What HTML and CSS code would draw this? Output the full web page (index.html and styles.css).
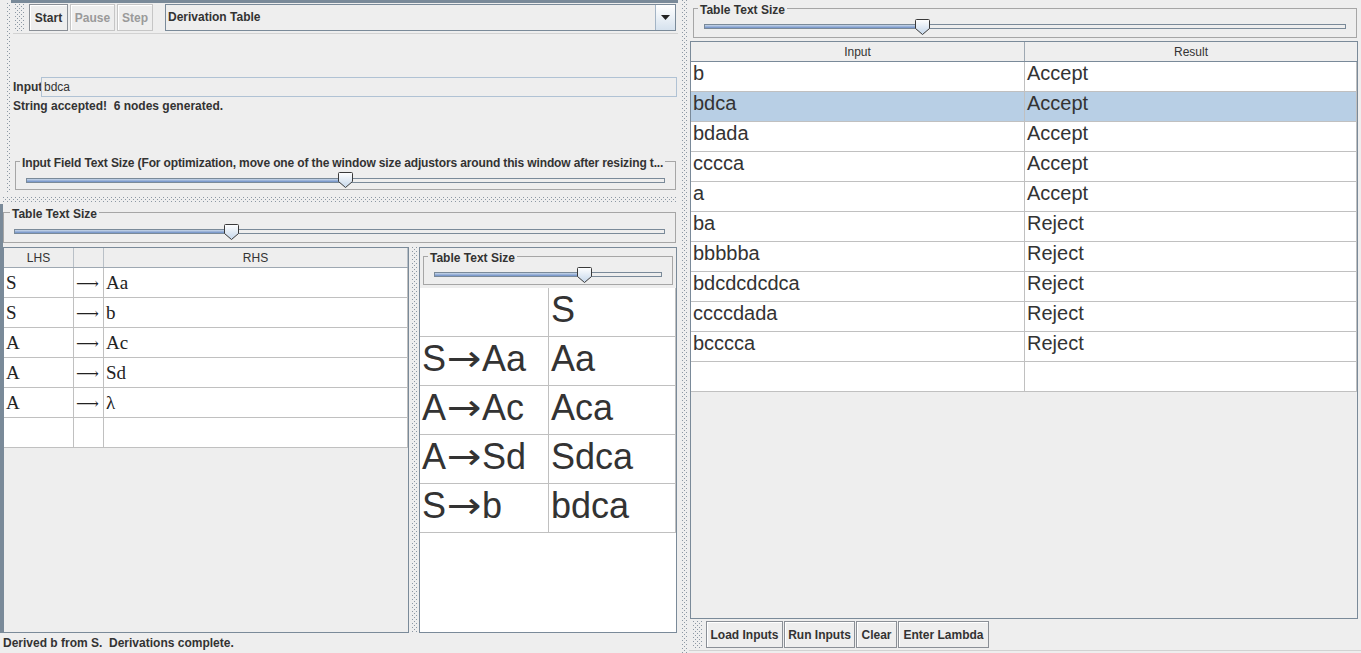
FILE: index.html
```html
<!DOCTYPE html>
<html>
<head>
<meta charset="utf-8">
<title>Brute Force Parser</title>
<link rel="stylesheet" href="styles.css">
</head>
<body>
<div class="app">
  <div class="left">
    <div class="top-panel">
      <div class="mini-split"><div class="bumps"></div></div>
      <div class="control">
        <div class="toolbar">
          <div class="grip bumps"></div>
          <button class="btn btn-start">Start</button>
          <button class="btn btn-pause" disabled>Pause</button>
          <button class="btn btn-step" disabled>Step</button>
          <div class="combo">
            <span class="combo-text">Derivation Table</span>
            <span class="combo-arrow"><svg width="9" height="5" viewBox="0 0 9 5"><path d="M0 0H9L4.5 5Z" fill="#222"/></svg></span>
          </div>
        </div>
        <div class="input-row">
          <span class="input-label">Input</span>
          <div class="input-field">bdca</div>
        </div>
        <div class="message">String accepted!  6 nodes generated.</div>
        <fieldset class="titled fs-input">
          <legend class="lg-long">Input Field Text Size (For optimization, move one of the window size adjustors around this window after resizing t...</legend>
          <div class="slider s-input">
            <div class="track"><div class="fill" style="width:318px"></div></div>
            <svg class="thumb" style="left:312px" width="15" height="16" viewBox="0 0 15 16"><defs><linearGradient id="t1" x1="0" y1="0" x2="0" y2="1"><stop offset="0" stop-color="#ffffff"/><stop offset="1" stop-color="#c4d6ea"/></linearGradient></defs><path d="M1.5 .5H13.5Q14.5 .5 14.5 1.5V9.5L7.5 15.5L.5 9.5V1.5Q.5 .5 1.5 .5Z" fill="url(#t1)" stroke="#3a3a3a"/></svg>
          </div>
        </fieldset>
      </div>
    </div>
    <div class="h-split"><div class="bumps"></div></div>
    <div class="lower">
      <div class="edge"></div>
      <div class="lower-content">
        <fieldset class="titled fs-table">
          <legend class="lg-wide">Table Text Size</legend>
          <div class="slider s-table">
            <div class="track"><div class="fill" style="width:216px"></div></div>
            <svg class="thumb" style="left:210px" width="15" height="16" viewBox="0 0 15 16"><defs><linearGradient id="t2" x1="0" y1="0" x2="0" y2="1"><stop offset="0" stop-color="#ffffff"/><stop offset="1" stop-color="#c4d6ea"/></linearGradient></defs><path d="M1.5 .5H13.5Q14.5 .5 14.5 1.5V9.5L7.5 15.5L.5 9.5V1.5Q.5 .5 1.5 .5Z" fill="url(#t2)" stroke="#3a3a3a"/></svg>
          </div>
        </fieldset>
        <div class="tables">
          <div class="scroll grammar">
            <div class="gh">
              <div class="c-lhs">LHS</div><div class="c-arr"></div><div class="c-rhs">RHS</div>
            </div>
            <div class="gr"><div class="c-lhs">S</div><div class="c-arr"><span class="arr">⟶</span></div><div class="c-rhs">Aa</div></div>
            <div class="gr"><div class="c-lhs">S</div><div class="c-arr"><span class="arr">⟶</span></div><div class="c-rhs">b</div></div>
            <div class="gr"><div class="c-lhs">A</div><div class="c-arr"><span class="arr">⟶</span></div><div class="c-rhs">Ac</div></div>
            <div class="gr"><div class="c-lhs">A</div><div class="c-arr"><span class="arr">⟶</span></div><div class="c-rhs">Sd</div></div>
            <div class="gr"><div class="c-lhs">A</div><div class="c-arr"><span class="arr">⟶</span></div><div class="c-rhs">λ</div></div>
            <div class="gr"><div class="c-lhs"></div><div class="c-arr"></div><div class="c-rhs"></div></div>
          </div>
          <div class="inner-split"><div class="bumps"></div></div>
          <div class="deriv-panel">
            <fieldset class="titled fs-deriv">
              <legend>Table Text Size</legend>
              <div class="slider s-deriv">
                <div class="track"><div class="fill" style="width:149px"></div></div>
                <svg class="thumb" style="left:143px" width="15" height="16" viewBox="0 0 15 16"><defs><linearGradient id="t3" x1="0" y1="0" x2="0" y2="1"><stop offset="0" stop-color="#ffffff"/><stop offset="1" stop-color="#c4d6ea"/></linearGradient></defs><path d="M1.5 .5H13.5Q14.5 .5 14.5 1.5V9.5L7.5 15.5L.5 9.5V1.5Q.5 .5 1.5 .5Z" fill="url(#t3)" stroke="#3a3a3a"/></svg>
              </div>
            </fieldset>
            <div class="deriv-view">
              <div class="dr"><div class="d1"></div><div class="d2">S</div></div>
              <div class="dr"><div class="d1">S<span class="darr">→</span>Aa</div><div class="d2">Aa</div></div>
              <div class="dr"><div class="d1">A<span class="darr">→</span>Ac</div><div class="d2">Aca</div></div>
              <div class="dr"><div class="d1">A<span class="darr">→</span>Sd</div><div class="d2">Sdca</div></div>
              <div class="dr"><div class="d1">S<span class="darr">→</span>b</div><div class="d2">bdca</div></div>
            </div>
          </div>
        </div>
      </div>
    </div>
    <div class="status">Derived b from S.  Derivations complete.</div>
  </div>
  <div class="main-split"><div class="bumps"></div></div>
  <div class="right">
    <fieldset class="titled fs-results">
      <legend>Table Text Size</legend>
      <div class="slider s-results">
        <div class="track"><div class="fill" style="width:217px"></div></div>
        <svg class="thumb" style="left:211px" width="15" height="16" viewBox="0 0 15 16"><defs><linearGradient id="t4" x1="0" y1="0" x2="0" y2="1"><stop offset="0" stop-color="#ffffff"/><stop offset="1" stop-color="#c4d6ea"/></linearGradient></defs><path d="M1.5 .5H13.5Q14.5 .5 14.5 1.5V9.5L7.5 15.5L.5 9.5V1.5Q.5 .5 1.5 .5Z" fill="url(#t4)" stroke="#3a3a3a"/></svg>
      </div>
    </fieldset>
    <div class="scroll results">
      <div class="rh"><div class="r1">Input</div><div class="r2">Result</div></div>
      <div class="rr"><div class="r1">b</div><div class="r2">Accept</div></div>
      <div class="rr sel"><div class="r1">bdca</div><div class="r2">Accept</div></div>
      <div class="rr"><div class="r1">bdada</div><div class="r2">Accept</div></div>
      <div class="rr"><div class="r1">cccca</div><div class="r2">Accept</div></div>
      <div class="rr"><div class="r1">a</div><div class="r2">Accept</div></div>
      <div class="rr"><div class="r1">ba</div><div class="r2">Reject</div></div>
      <div class="rr"><div class="r1">bbbbba</div><div class="r2">Reject</div></div>
      <div class="rr"><div class="r1">bdcdcdcdca</div><div class="r2">Reject</div></div>
      <div class="rr"><div class="r1">ccccdada</div><div class="r2">Reject</div></div>
      <div class="rr"><div class="r1">bcccca</div><div class="r2">Reject</div></div>
      <div class="rr"><div class="r1"></div><div class="r2"></div></div>
    </div>
    <div class="bottom-bar">
      <div class="grip bumps"></div>
      <button class="btn btn-load">Load Inputs</button>
      <button class="btn btn-run">Run Inputs</button>
      <button class="btn btn-clear">Clear</button>
      <button class="btn btn-lambda">Enter Lambda</button>
    </div>
  </div>
</div>
</body>
</html>
```
FILE: styles.css
```css
* { box-sizing: border-box; }
html, body { margin: 0; padding: 0; }
body {
  width: 1361px;
  height: 653px;
  overflow: hidden;
  background: #eeeeee;
  font: bold 12px "Liberation Sans", Arial, sans-serif;
  color: #333333;
}
.app { display: flex; width: 1361px; height: 653px; }

/* Metal "bumps" texture used by split dividers and toolbar grips */
.bumps {
  background-color: #eeeeee;
  background-image:
    conic-gradient(at 1px 1px, transparent 75%, #8c98a4 75%),
    conic-gradient(at 1px 1px, transparent 75%, #8c98a4 75%);
  background-size: 4px 4px, 4px 4px;
  background-position: 0 0, 2px 2px;
}

/* ---------- left side ---------- */
.left { width: 680px; flex-shrink: 0; display: flex; flex-direction: column; min-width: 0; }
.top-panel { height: 195px; flex-shrink: 0; display: flex; padding-left: 5px; padding-right: 2px; }
.mini-split { width: 6px; flex-shrink: 0; padding: 3px 0 2px 2px; display: flex; }
.mini-split .bumps { flex: 1; }
.control {
  flex: 1;
  min-width: 0;
  border-top: 3px solid #7a8a99;
  padding-left: 2px;
  display: flex;
  flex-direction: column;
}
.toolbar {
  height: 31px;
  flex-shrink: 0;
  padding: 1px 2px 0 2px;
  border-bottom: 1px solid #d2d2d2;
  display: flex;
  align-items: flex-start;
}
.grip { width: 10px; height: 27px; flex-shrink: 0; }

.btn {
  appearance: none;
  -webkit-appearance: none;
  height: 27px;
  flex-shrink: 0;
  padding: 0;
  margin: 0;
  border: 1px solid #8a8f96;
  box-shadow: inset 1px 1px 0 #ffffff;
  background: #eeeeee;
  font: bold 12px "Liberation Sans", Arial, sans-serif;
  color: #333333;
  text-align: center;
}
.btn:disabled { border-color: #c6c6c6; color: #9a9a9a; }
.btn-start { width: 39px; margin-left: 4px; }
.btn-pause { width: 45px; margin-left: 2px; }
.btn-step { width: 36px; margin-left: 2px; }
.btn-load { width: 77px; margin-left: 3px; }
.btn-run { width: 71px; margin-left: 1px; }
.btn-clear { width: 41px; margin-left: 1px; }
.btn-lambda { width: 91px; margin-left: 1px; }

.combo {
  flex: 1;
  min-width: 0;
  height: 27px;
  margin-left: 12px;
  border: 1px solid #7a8a99;
  background: #eeeeee;
  display: flex;
}
.combo-text { flex: 1; padding-left: 2px; line-height: 25px; }
.combo-arrow {
  width: 20px;
  border-left: 1px solid #a3b4c5;
  background: linear-gradient(#ffffff, #d6e2ee);
  display: flex;
  align-items: center;
  justify-content: center;
}

.input-row { margin-top: 43px; display: flex; height: 20px; flex-shrink: 0; }
.input-label { width: 28px; line-height: 20px; }
.input-field {
  flex: 1;
  margin-right: 1px;
  border: 1px solid #b0c2d4;
  background: #eeeeee;
  font-weight: normal;
  line-height: 18px;
  padding-left: 2px;
}
.message { margin-top: 2px; line-height: 14px; white-space: pre; }

/* titled borders */
.titled {
  margin: 0;
  padding: 0 10px 2px 10px;
  border: 1px solid #a6a6a6;
  min-width: 0;
  flex-shrink: 0;
}
.titled legend {
  padding: 3px 2px 0 2px;
  margin-left: -6px;
  line-height: 14px;
  font-weight: bold;
  white-space: nowrap;
}
.titled legend.lg-wide { margin-left: -4px; }
.titled legend.lg-long { letter-spacing: -0.13px; }
.fs-input { margin: 40px 2px 0 2px; padding-bottom: 1px; }
.fs-table { margin: 0 4px 0 0; padding-bottom: 2px; }
.fs-deriv { margin: 0 3px; padding-bottom: 1px; }
.fs-results { margin: 0 4px; padding-bottom: 2px; }

/* sliders */
.slider { position: relative; }
.track {
  height: 5px;
  border: 1px solid #7a8a99;
  background: #eeeeee;
}
.fill { height: 100%; background: linear-gradient(#c9d8ea, #6f8fc6); }
.thumb { position: absolute; }
.s-input { height: 18px; padding-top: 8px; }
.s-input .thumb { top: 2px; }
.s-table { height: 19px; padding-top: 8px; }
.s-table .thumb { top: 3px; }
.s-deriv, .s-results { height: 18px; padding-top: 7px; }
.s-deriv .thumb, .s-results .thumb { top: 2px; }

.h-split { height: 9px; flex-shrink: 0; padding: 2px 3px 2px 3px; display: flex; }
.h-split .bumps { flex: 1; }

.lower { flex: 1; display: flex; min-height: 0; }
.edge { width: 3px; flex-shrink: 0; background: #7a8a99; margin-bottom: 1px; }
.lower-content { flex: 1; min-width: 0; display: flex; flex-direction: column; }
.tables { margin-top: 4px; height: 386px; flex-shrink: 0; display: flex; }

.scroll { border: 1px solid #7a8a99; background: #eeeeee; overflow: hidden; }
.grammar { width: 406px; flex-shrink: 0; }

.gh { display: flex; height: 20px; border-bottom: 1px solid #9ea8b2; }
.gh > div {
  border-right: 1px solid #b9c0c7;
  text-align: center;
  font: 12px "Liberation Sans", Arial, sans-serif;
  padding-top: 2px;
  line-height: 17px;
  color: #333333;
}
.c-lhs { width: 70px; }
.c-arr { width: 30px; }
.c-rhs { width: 304px; }
.gr { display: flex; height: 30px; background: #ffffff; }
.gr > div {
  border-right: 1px solid #c0c0c0;
  border-bottom: 1px solid #c0c0c0;
  padding-top: 4px;
  line-height: 25px;
  padding-left: 2px;
  font: 19px "Liberation Serif", "Times New Roman", serif;
  color: #222222;
  white-space: nowrap;
  overflow: hidden;
}
.gr > .c-arr { padding-left: 2px; }
.arr { font-family: "DejaVu Serif", serif; font-size: 16px; }

.inner-split { width: 10px; flex-shrink: 0; padding: 0 2px 0 3px; display: flex; }
.inner-split .bumps { flex: 1; }

.deriv-panel {
  width: 258px;
  flex-shrink: 0;
  border: 1px solid #7a8a99;
  display: flex;
  flex-direction: column;
}
.deriv-view { margin-top: 3px; flex: 1; background: #ffffff; }
.dr { display: flex; height: 49px; }
.dr > div {
  border-right: 1px solid #c0c0c0;
  border-bottom: 1px solid #c0c0c0;
  padding-top: 1px;
  line-height: 47px;
  padding-left: 2px;
  font: 36px "Liberation Sans", Arial, sans-serif;
  color: #333333;
  white-space: nowrap;
  overflow: hidden;
}
.darr {
  font-family: "DejaVu Sans", sans-serif;
  display: inline-block;
  width: 1em;
  text-align: center;
  transform: scaleX(1.15);
}
.d1 { width: 129px; }
.d2 { width: 127px; }

.status { height: 19px; flex-shrink: 0; line-height: 19px; padding-left: 3px; white-space: pre; }

.main-split { width: 9px; flex-shrink: 0; padding: 0 1px 0 2px; display: flex; }
.main-split .bumps { flex: 1; }

/* ---------- right side ---------- */
.right { flex: 1; min-width: 0; display: flex; flex-direction: column; }
.results { margin: 3px 3px 0 1px; height: 578px; flex-shrink: 0; }
.rh { display: flex; height: 20px; border-bottom: 1px solid #7a8a99; }
.rh > div {
  text-align: center;
  font: 12px "Liberation Sans", Arial, sans-serif;
  padding-top: 2px;
  line-height: 17px;
  color: #333333;
}
.rh > .r1 { border-right: 1px solid #9ea8b2; }
.r1 { width: 334px; }
.r2 { width: 332px; }
.rr { display: flex; height: 30px; background: #ffffff; }
.rr.sel { background: #b8cfe5; }
.rr > div {
  border-right: 1px solid #c0c0c0;
  border-bottom: 1px solid #c0c0c0;
  line-height: 29px;
  padding-left: 2px;
  font: 20px "Liberation Sans", Arial, sans-serif;
  color: #333333;
  white-space: nowrap;
}
.bottom-bar {
  height: 32px;
  flex-shrink: 0;
  padding: 2px 0 0 4px;
  border-bottom: 1px solid #d2d2d2;
  display: flex;
  align-items: flex-start;
}
```
